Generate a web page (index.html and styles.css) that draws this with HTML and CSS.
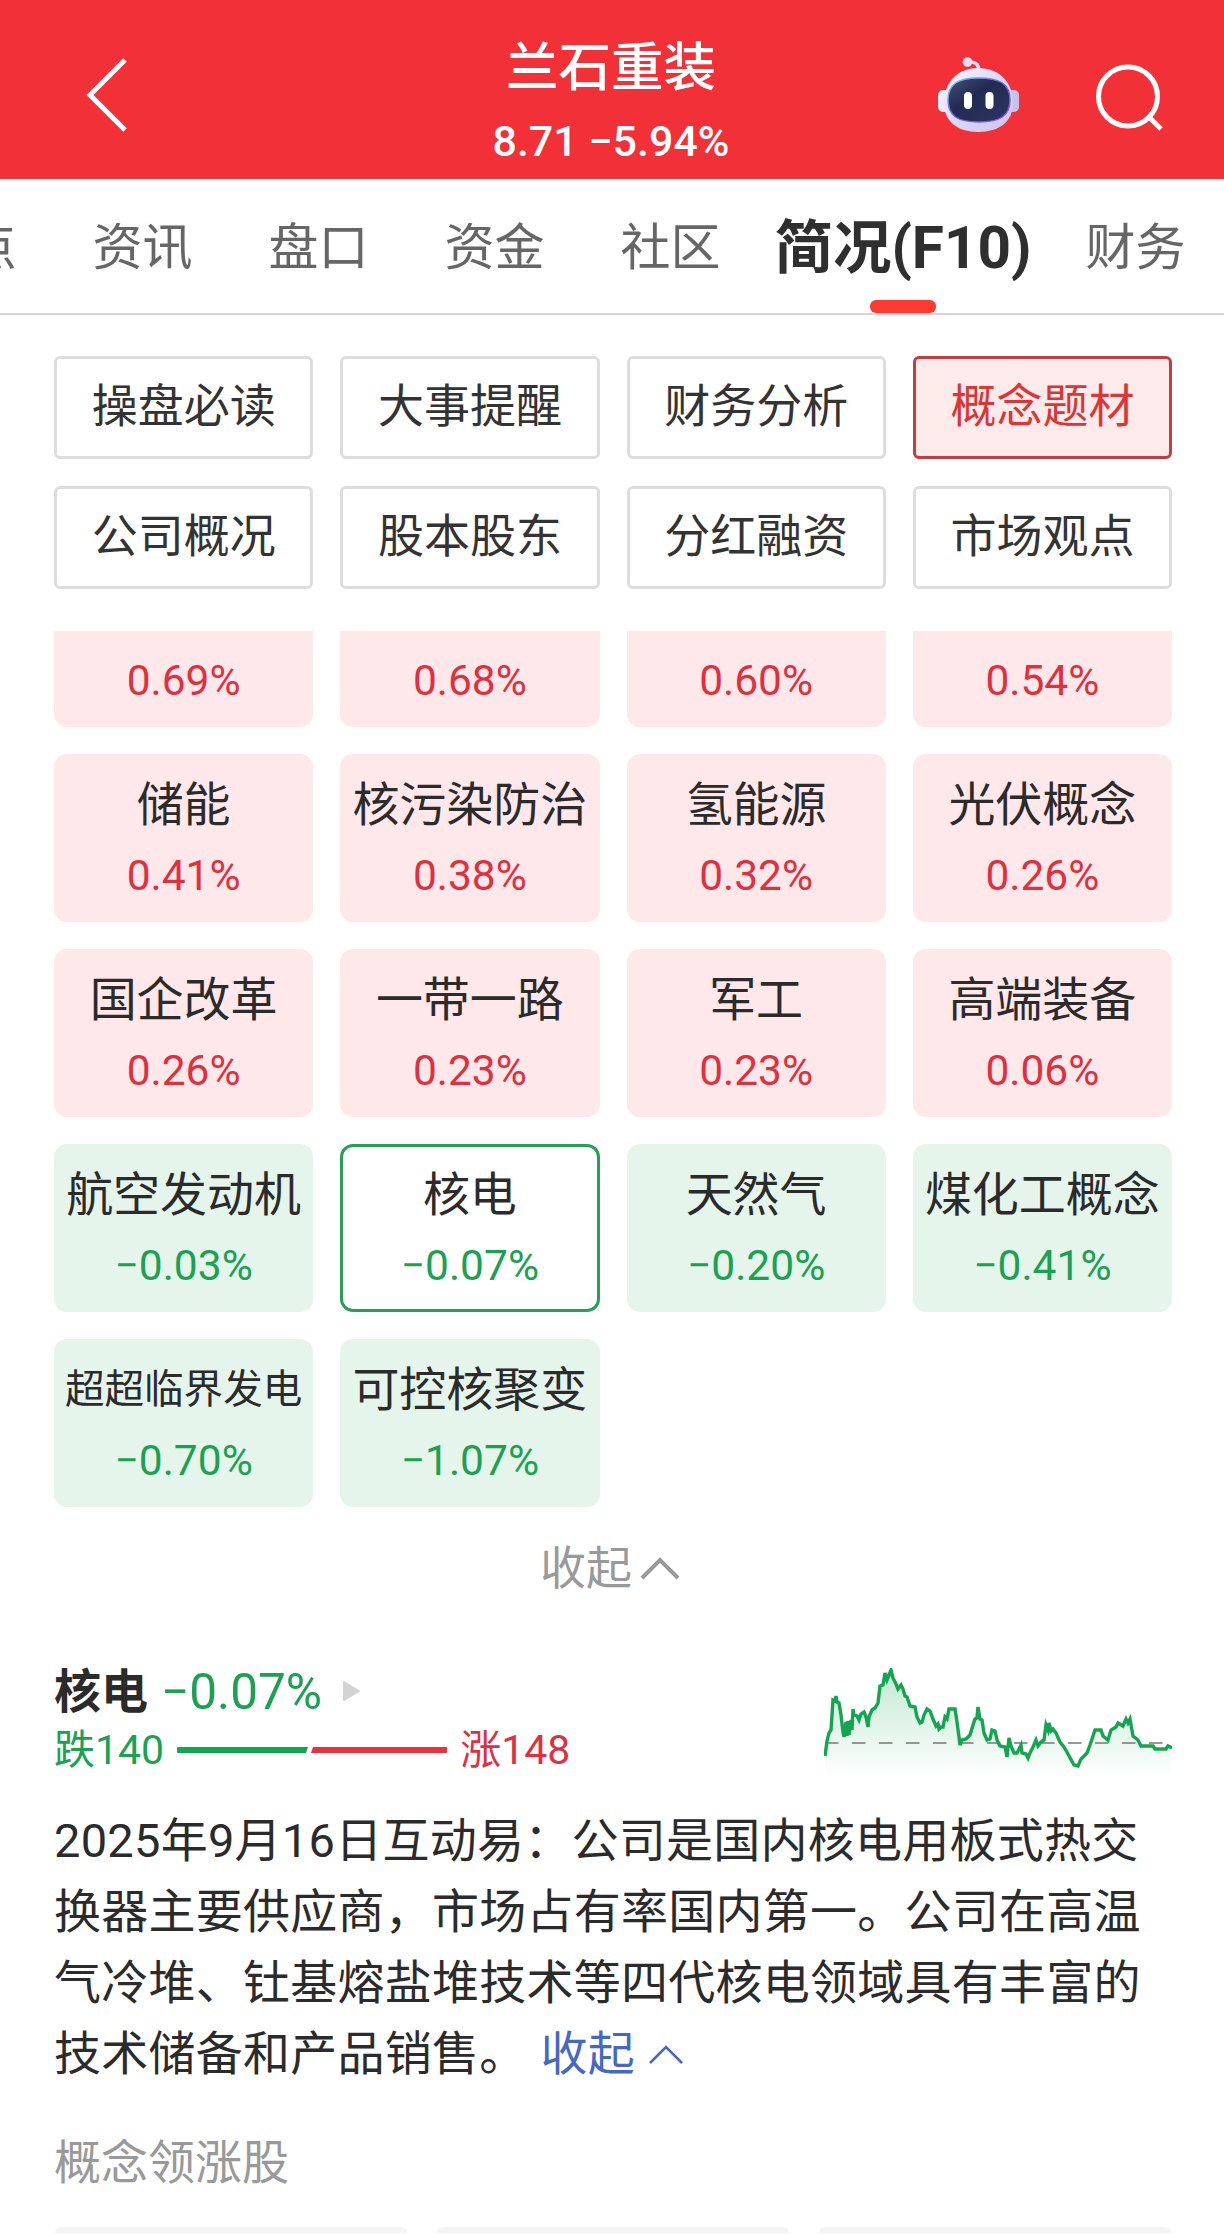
FILE: index.html
```html
<!DOCTYPE html>
<html lang="zh-CN">
<head>
    <meta charset="UTF-8">
    <meta name="viewport" content="width=device-width, initial-scale=1.0">
    <title>兰石重装</title>
    <link rel="stylesheet" href="styles.css">
</head>
<body>
    <header class="header">
        <svg class="back" width="46" height="80" viewBox="0 0 46 80" fill="none" stroke="#fff" stroke-width="5">
            <path d="M42 5L7 40L42 75"/>
        </svg>
        <div class="stock">
            <h1>兰石重装</h1>
            <p>8.71 −5.94%</p>
        </div>
        <div class="header-icons">
            <svg width="82" height="76" viewBox="0 0 82 76">
                <defs>
                    <linearGradient id="shell" x1="0" y1="0" x2="1" y2="1">
                        <stop offset="0" stop-color="#fbf8ff"/>
                        <stop offset="0.5" stop-color="#dcd8f6"/>
                        <stop offset="1" stop-color="#c9c3ee"/>
                    </linearGradient>
                    <linearGradient id="rim" x1="0" y1="0" x2="1" y2="1">
                        <stop offset="0" stop-color="#7fd3e8"/>
                        <stop offset="0.5" stop-color="#6a5be0"/>
                        <stop offset="1" stop-color="#a84fe0"/>
                    </linearGradient>
                    <linearGradient id="visor" x1="0" y1="0" x2="1" y2="1">
                        <stop offset="0" stop-color="#46507a"/>
                        <stop offset="0.4" stop-color="#222b50"/>
                        <stop offset="1" stop-color="#2b3561"/>
                    </linearGradient>
                </defs>
                <path d="M30 5Q41 4 41 14" fill="none" stroke="#e9dcf5" stroke-width="3.5"/>
                <circle cx="29.500" cy="5" r="4.800" fill="#e6def7"/>
                <rect x="0" y="33" width="12" height="22" rx="5" fill="#efeafc"/>
                <rect x="69" y="33" width="12" height="22" rx="5" fill="#c6c0ec"/>
                <path d="M40 11C62 11 75 26 75 46C75 64 62 75 40 75C19 75 6 64 6 46C6 26 19 11 40 11Z" fill="url(#shell)"/>
                <path d="M40 21C62 21 72 27 72 43C72 59 62 65 41 65C20 65 10 59 10 43C10 27 20 21 40 21Z" fill="url(#visor)" stroke="url(#rim)" stroke-width="1.500"/>
                <rect x="26" y="35" width="8" height="17" rx="4" fill="#fff"/>
                <rect x="47.500" y="35" width="8" height="17" rx="4" fill="#fff"/>
            </svg>
            <svg width="72" height="72" viewBox="0 0 72 72" fill="none" stroke="#fff" stroke-width="5">
                <circle cx="34" cy="34.500" r="29.500"/>
                <path d="M55 55L67 67"/>
            </svg>
        </div>
    </header>

    <nav class="tabs">
        <span>热点</span>
        <span>资讯</span>
        <span>盘口</span>
        <span>资金</span>
        <span>社区</span>
        <span class="active">简况(F10)</span>
        <span>财务</span>
    </nav>

    <div class="menu">
        <span>操盘必读</span>
        <span>大事提醒</span>
        <span>财务分析</span>
        <span class="current">概念题材</span>
        <span>公司概况</span>
        <span>股本股东</span>
        <span>分红融资</span>
        <span>市场观点</span>
    </div>

    <div class="concepts">
        <div class="card up"><b>锂电池概念</b><i>0.69%</i></div>
        <div class="card up"><b>风能</b><i>0.68%</i></div>
        <div class="card up"><b>工业</b><i>0.60%</i></div>
        <div class="card up"><b>新能源</b><i>0.54%</i></div>
        <div class="card up"><b>储能</b><i>0.41%</i></div>
        <div class="card up"><b>核污染防治</b><i>0.38%</i></div>
        <div class="card up"><b>氢能源</b><i>0.32%</i></div>
        <div class="card up"><b>光伏概念</b><i>0.26%</i></div>
        <div class="card up"><b>国企改革</b><i>0.26%</i></div>
        <div class="card up"><b>一带一路</b><i>0.23%</i></div>
        <div class="card up"><b>军工</b><i>0.23%</i></div>
        <div class="card up"><b>高端装备</b><i>0.06%</i></div>
        <div class="card down"><b>航空发动机</b><i>−0.03%</i></div>
        <div class="card down selected"><b>核电</b><i>−0.07%</i></div>
        <div class="card down"><b>天然气</b><i>−0.20%</i></div>
        <div class="card down"><b>煤化工概念</b><i>−0.41%</i></div>
        <div class="card down"><b class="long">超超临界发电</b><i>−0.70%</i></div>
        <div class="card down"><b>可控核聚变</b><i>−1.07%</i></div>
    </div>

    <div class="fold">
        <span>收起</span>
        <svg width="40" height="24" viewBox="0 0 40 24" fill="none" stroke="#999" stroke-width="4">
            <path d="M2 22L20 4L38 22"/>
        </svg>
    </div>

    <section class="detail">
        <div class="info">
            <div class="name">
                <strong>核电</strong>
                <em>−0.07%</em>
                <svg width="19" height="22" viewBox="0 0 19 22">
                    <path d="M2 2L17 11L2 20Z" fill="#d3d3d3" stroke="#d3d3d3" stroke-width="2" stroke-linejoin="round"/>
                </svg>
            </div>
            <div class="ratio">
                <span class="fall">跌140</span>
                <svg width="270" height="6" viewBox="0 0 270 6">
                    <path d="M1 0H131L129 6H1Q0 6 0 5V1Q0 0 1 0Z" fill="#14a550"/>
                    <path d="M136 0H269Q270 0 270 1V5Q270 6 269 6H134Z" fill="#ee2e3c"/>
                </svg>
                <span class="rise">涨148</span>
            </div>
        </div>
        <svg class="chart" width="348" height="112" viewBox="24 18 348 112">
            <defs>
                <linearGradient id="area" x1="0" y1="0" x2="0" y2="1">
                    <stop offset="0" stop-color="#14a550" stop-opacity="0.250"/>
                    <stop offset="1" stop-color="#14a550" stop-opacity="0"/>
                </linearGradient>
            </defs>
            <path fill="url(#area)" d="M25 106L27 88L31 80L33 50L36 48L40 55L44 87L47 72L50 84L53 62L60 68L63 64L68 72L78 53L81 36L85 24L91 22L98 38L105 42L110 56L115 57L120 73L128 59L138 78L146 68L151 59L155 60L160 93L168 86L177 60L181 69L187 90L193 80L200 96L207 108L209 90L215 103L222 96L229 108L236 90L241 93L248 74L255 80L262 96L276 117L288 103L295 80L302 80L307 90L312 78L318 74L327 69L331 72L333 85L342 96L354 99L371 97V128H25Z"/>
            <path d="M25 93H372" stroke="#777" stroke-width="1.500" stroke-dasharray="13.500 13.500"/>
            <path fill="none" stroke="#14a550" stroke-width="3.400" d="M25 106L27 91L29 83L31 80L33 50L35 51L36 46L37 52L39 53L41 65L43 82L44 87L46 72L47 86L48 71L49 85L51 70L52 80L53 59L54 65L57 66L59 70L61 64L64 62L66 67L68 77L69 67L72 60L75 58L78 53L80 36L83 35L85 23L87 30L89 25L91 20L93 28L96 34L98 39L101 35L103 39L105 46L107 47L110 56L115 57L117 67L120 73L122 72L124 65L127 59L130 61L133 69L136 76L138 74L139 79L141 77L143 77L145 67L147 69L149 59L155 59L157 72L159 87L160 95L162 90L166 89L170 85L173 75L175 69L177 68L178 57L180 69L182 70L184 83L187 90L190 89L192 80L195 81L197 90L200 96L205 97L207 107L209 88L211 96L214 103L217 103L221 95L222 103L226 104L228 108L230 103L233 97L236 90L238 96L241 92L244 90L246 75L248 80L249 73L251 81L253 79L256 83L260 92L264 97L268 104L274 115L278 116L281 109L287 103L290 95L295 80L301 80L303 86L308 90L311 80L316 77L318 73L323 76L326 69L328 73L330 69L333 86L338 90L341 96L353 96L355 99L366 99L368 96L372 98"/>
        </svg>
    </section>

    <p class="desc">2025年9月16日互动易：公司是国内核电用板式热交换器主要供应商，市场占有率国内第一。公司在高温气冷堆、钍基熔盐堆技术等四代核电领域具有丰富的技术储备和产品销售。<a>收起<svg width="34" height="20" viewBox="0 0 34 20" fill="none" stroke="#4468c4" stroke-width="2.500"><path d="M1 19L17 3L33 19"/></svg></a></p>

    <h2 class="subtitle">概念领涨股</h2>
    <div class="leaders">
        <div></div>
        <div></div>
        <div></div>
    </div>
</body>
</html>
```
FILE: styles.css
```css
* {
    box-sizing: border-box;
}
body {
    font-family: Roboto, "Noto Sans CJK SC", sans-serif;
    background-color: #fff;
    margin: 0;
    color: #2b2b2b;
    height: 2234px;
    overflow: hidden;
}
h1, h2, p {
    margin: 0;
    font-weight: normal;
}
header {
    background-color: #f23037;
    color: white;
    height: 179px;
    padding: 0 58px 0 83px;
    display: grid;
    grid-template-columns: 228px 1fr 228px;
}
.back {
    margin-top: 55px;
}
.stock {
    text-align: center;
    padding-top: 38px;
    margin-right: 27px;
}
.stock h1 {
    font-size: 52.5px;
    line-height: 60px;
    font-weight: 500;
}
.stock p {
    font-size: 43px;
    line-height: 50px;
    padding-top: 18px;
    font-weight: 500;
    white-space: nowrap;
}
.header-icons {
    display: flex;
    justify-content: flex-end;
    align-items: flex-start;
    gap: 74px;
    padding-top: 57px;
}
.header-icons svg {
    flex: none;
}
.header-icons svg + svg {
    margin-top: 5px;
}
.tabs {
    display: flex;
    justify-content: center;
    height: 136px;
    width: 1360px;
    margin-left: -91px;
    border-bottom: 2px solid #d4d4d4;
    font-size: 50px;
    line-height: 138px;
    color: #666;
    white-space: nowrap;
}
.tabs span {
    flex: none;
    width: 100px;
    margin-right: 76px;
}
.tabs .active {
    width: 257px;
    margin: 0 54px 0 -22px;
    font-size: 58.5px;
    font-weight: bold;
    color: #2f2f2f;
    display: flex;
    flex-direction: column;
    align-items: center;
}
.tabs .active::after {
    content: "";
    width: 66px;
    height: 14px;
    margin-top: -17px;
    border-radius: 6px;
    background-color: #fb3a30;
}
.menu, .concepts {
    display: grid;
    grid-template-columns: repeat(4, 1fr);
    gap: 27px;
    margin: 0 52px 0 54px;
}
.menu {
    margin-top: 41px;
}
.menu span {
    height: 103px;
    border: 3px solid #ddd;
    border-radius: 6px;
    font-size: 46px;
    line-height: 95px;
    text-align: center;
    color: #333;
}
.menu .current {
    border-color: #c43d40;
    background-color: #fdeaea;
    color: #dc3535;
}
/* list is scrolled, first row is cut at the top */
.concepts {
    margin-top: 42px;
    height: 876px;
    align-content: end;
    overflow: hidden;
}
.card {
    height: 168px;
    border-radius: 13px;
    text-align: center;
    padding-top: 16px;
}
.card b {
    display: block;
    font-size: 47px;
    line-height: 70px;
    font-weight: normal;
    white-space: nowrap;
}
.card .long {
    font-size: 39.6px;
}
.card i {
    display: block;
    font-style: normal;
    font-size: 42.5px;
    line-height: 72px;
}
.up {
    background-color: #fee8ea;
}
.up i {
    color: #e0303f;
}
.down {
    background-color: #e5f5eb;
}
.down i {
    color: #1ba152;
}
.selected {
    background-color: #fff;
    border: 3px solid #279f57;
    padding-top: 13px;
}
.fold {
    display: flex;
    justify-content: center;
    align-items: center;
    gap: 8px;
    height: 70px;
    margin: 26px 4px 0 0;
    font-size: 46px;
    color: #999;
}
.fold span {
    margin-bottom: 8px;
}
.detail {
    display: flex;
    justify-content: space-between;
    padding: 0 52px 0 54px;
    margin-top: 51px;
    height: 150px;
}
.name {
    display: flex;
    align-items: center;
    height: 74px;
    font-size: 47px;
}
.name strong {
    margin-bottom: 8px;
}
.name em {
    font-style: normal;
    font-size: 49.5px;
    color: #1ba152;
    margin: 1px 20px 0 13px;
}
.ratio {
    display: flex;
    align-items: center;
    gap: 14px;
    height: 42px;
    font-size: 41px;
}
.ratio span {
    margin-bottom: 6px;
}
.ratio svg {
    margin: 2px -1px 0;
}
.fall {
    color: #1ba152;
}
.rise {
    color: #e0303f;
}
.chart {
    margin-top: 14px;
}
.desc {
    padding: 1px 52px 0 54px;
    font-size: 47px;
    letter-spacing: 0.25px;
    line-height: 71px;
    height: 286px;
}
.desc a {
    color: #4468c4;
    margin-left: 14px;
}
.desc svg {
    margin: 0 0 6px 14px;
}
.subtitle {
    margin: 38px 0 0 54px;
    font-size: 47px;
    line-height: 70px;
    color: #999;
}
.leaders {
    display: grid;
    grid-template-columns: repeat(3, 1fr);
    gap: 30px;
    margin: 29px 53px 0 55px;
}
.leaders div {
    height: 6px;
    border-radius: 13px 13px 0 0;
    background-color: #f4f4f4;
}
```
